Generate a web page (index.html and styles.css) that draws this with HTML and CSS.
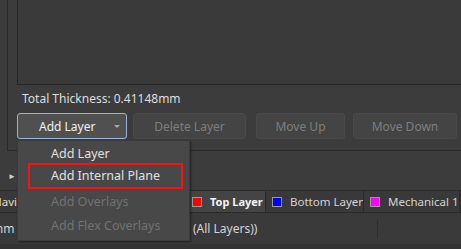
FILE: index.html
```html
<!DOCTYPE html>
<html lang="en">
<head>
    <meta charset="UTF-8">
    <title>Layer Stack Manager</title>
    <link rel="stylesheet" href="styles.css">
</head>
<body>
    <!-- layer stack panel -->
    <div class="stack-panel">
        <div class="stack-table"></div>
        <div class="thickness">Total Thickness: 0.41148mm</div>
        <div class="btn-row">
            <button class="btn btn-add">
                <span>Add Layer</span>
                <span class="caret"></span>
            </button>
            <button class="btn btn-delete" disabled>Delete Layer</button>
            <button class="btn btn-up" disabled>Move Up</button>
            <button class="btn btn-down" disabled>Move Down</button>
        </div>
    </div>

    <!-- nav strip -->
    <div class="nav-row">
        <span class="play">&#9658;</span>
    </div>

    <!-- layer tabs -->
    <div class="tab-bar">
        <div class="tab tab-nav">Navigator</div>
        <div class="tab tab-hidden"></div>
        <div class="tab tab-top active"><i class="swatch" style="background:#ff0000"></i>Top Layer</div>
        <div class="tab tab-bottom"><i class="swatch" style="background:#0000ff"></i>Bottom Layer</div>
        <div class="tab"><i class="swatch" style="background:#ff00ff"></i>Mechanical 1</div>
    </div>

    <div class="status-row">
        <span class="status-left">mm</span>
        <span class="status-mid">(All Layers))</span>
        <span class="status-sep"></span>
    </div>
    <div class="bottom-strip"></div>

    <!-- add layer dropdown -->
    <ul class="menu">
        <li class="first">Add Layer</li>
        <li class="marked">Add Internal Plane</li>
        <li class="disabled">Add Overlays</li>
        <li class="disabled last">Add Flex Coverlays</li>
    </ul>
</body>
</html>
```

FILE: styles.css
```css
* {
    box-sizing: border-box;
    margin: 0;
    padding: 0;
}

body {
    width: 461px;
    height: 249px;
    overflow: hidden;
    position: relative;
    background: #3c3c3c;
    font-family: "Noto Sans", "Open Sans", sans-serif;
    font-size: 12px;
    color: #dcdcdc;
}

/* 上部面板 */
.stack-panel {
    margin-left: 7px;
    height: 151px;
    border-left: 1px solid #2a2a2a;
    border-bottom: 1px solid #2a2a2a;
    padding-left: 9px;
}

.stack-table {
    height: 85px;
    background: #3a3a3a;
    border-left: 1px solid #262626;
    border-bottom: 1px solid #262626;
}

.thickness {
    padding: 6px 0 0 5px;
    height: 28px;
    line-height: 16px;
}

.btn-row {
    display: flex;
    gap: 6px;
}

.btn {
    height: 26px;
    font-family: inherit;
    font-size: 12px;
    border-radius: 3px;
    border: 1px solid #4a4a4a;
    background: #444;
    color: #7e7e7e;
}

.btn-add {
    width: 110px;
    display: flex;
    align-items: center;
    justify-content: space-between;
    padding: 0 6px 0 21px;
    background: #505050;
    border-color: #9fb3d6;
    color: #f0f0f0;
}

.caret {
    width: 0;
    height: 0;
    border-left: 3px solid transparent;
    border-right: 3px solid transparent;
    border-top: 3px solid #a8a8a8;
}

.btn-delete { width: 113px; }
.btn-up { width: 89px; margin-left: 4px; }
.btn-down { width: 104px; margin-left: 2px; }

.nav-row {
    height: 40px;
    padding: 15px 0 0 8px;
    border-bottom: 1px solid #2a2a2a;
}

.play {
    font-size: 8px;
    color: #cfcfcf;
}

/* 标签栏 */
.tab-bar {
    display: flex;
    height: 22px;
    background: #333;
    border-bottom: 1px solid #2a2a2a;
    overflow: hidden;
}

.tab {
    flex-shrink: 0;
    display: flex;
    align-items: center;
    padding: 0 0 0 6px;
    background: #393939;
    border-right: 1px solid #2a2a2a;
    color: #d4d4d4;
    font-size: 11.5px;
    white-space: nowrap;
    overflow: hidden;
}

.tab-nav {
    width: 60px;
    padding: 0;
    color: #e4dcc4;
    text-indent: -7px;
}

.tab-hidden {
    width: 126px;
}

.tab-top {
    width: 80px;
}

.tab-bottom {
    width: 98px;
}

.tab.active {
    background: #444;
    font-weight: bold;
    font-size: 11px;
    color: #f4f4f4;
}

.swatch {
    flex-shrink: 0;
    width: 10px;
    height: 10px;
    border: 1px solid #9a9a9a;
    margin-right: 8px;
}

.status-row {
    display: flex;
    align-items: center;
    height: 31px;
    color: #d4d4d4;
    background: #3a3a3a;
}

.status-left {
    width: 193px;
    text-indent: -8px;
}

.status-mid {
    width: 184px;
}

.status-sep {
    width: 1px;
    height: 18px;
    background: #2c2c2c;
}

.bottom-strip {
    height: 8px;
    background: #333;
}

/* 下拉菜单 */
.menu {
    position: absolute;
    left: 17px;
    top: 140px;
    width: 173px;
    height: 101px;
    list-style: none;
    background: #484848;
    border: 1px solid #3a3a3a;
    box-shadow: 1px 1px 2px rgba(0, 0, 0, 0.45);
}

.menu li {
    height: 24px;
    line-height: 24px;
    padding-left: 23px;
    margin: 0 6px 0 10px;
    color: #e0e0e0;
    font-size: 12.5px;
}

.menu li.first {
    height: 22px;
    padding-top: 4px;
    line-height: 18px;
}

.menu li.marked {
    height: 26px;
    line-height: 22px;
    border: 2px solid #ff1010;
    padding-left: 21px;
}

.menu li.disabled {
    height: 25px;
    line-height: 25px;
    color: #727272;
}

.menu li.last {
    height: 24px;
    line-height: 24px;
}
```
